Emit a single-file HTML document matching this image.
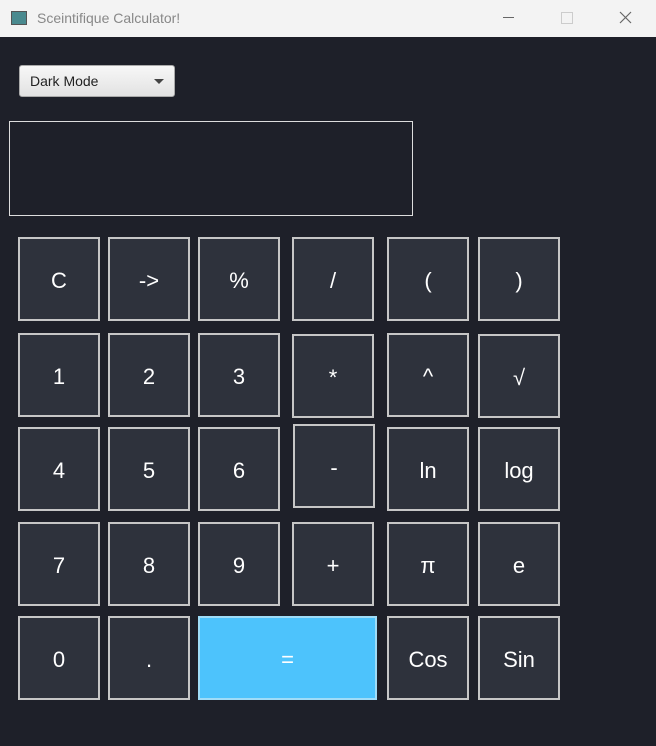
<!DOCTYPE html>
<html><head><style>
body{margin:0;width:656px;height:746px;background:#1e2029;font-family:"Liberation Sans",sans-serif;position:relative;overflow:hidden}
.tb{position:absolute;left:0;top:0;width:656px;height:37px;background:#f3f3f3}
.tb .t{position:absolute;left:37px;top:10px;font-size:14px;color:#888}
.ic{position:absolute;left:11px;top:11px;width:14px;height:12px;border:1px solid #555;background:#4a8a8f}
.b{position:absolute;box-sizing:border-box;border:2px solid #c6c6c6;background:#2e323c;color:#fff;font-size:22px;display:flex;align-items:center;justify-content:center;width:82px;height:84px;padding-top:4px}
.dd{position:absolute;left:19px;top:65px;width:156px;height:32px;box-sizing:border-box;border:1px solid #aaa;border-radius:3px;background:linear-gradient(#f7f7f7,#e2e2e2);font-size:14px;color:#222;padding:7px 0 0 10px}
.dd:after{content:"";position:absolute;right:10px;top:13px;border:5px solid transparent;border-top:5px solid #444}
.disp{position:absolute;left:9px;top:121px;width:404px;height:95px;box-sizing:border-box;border:1px solid #ddd;background:#1e2029}
</style></head><body>
<div class="tb"><div class="ic"></div><div class="t">Sceintifique Calculator!</div>
<div style="position:absolute;left:503px;top:17px;width:11px;height:1px;background:#666"></div>
<div style="position:absolute;left:561px;top:12px;width:10px;height:10px;border:1px solid #ccc"></div>
<svg style="position:absolute;left:619px;top:11px" width="13" height="13"><path d="M1 1L12 12M12 1L1 12" stroke="#666" stroke-width="1.2"/></svg></div>
<div class="dd">Dark Mode</div>
<div class="disp"></div>
<div class="b" style="left:18px;top:237px">C</div>
<div class="b" style="left:108px;top:237px">-&gt;</div>
<div class="b" style="left:198px;top:237px">%</div>
<div class="b" style="left:292px;top:237px">/</div>
<div class="b" style="left:387px;top:237px">(</div>
<div class="b" style="left:478px;top:237px">)</div>
<div class="b" style="left:18px;top:333px">1</div>
<div class="b" style="left:108px;top:333px">2</div>
<div class="b" style="left:198px;top:333px">3</div>
<div class="b" style="left:292px;top:334px">*</div>
<div class="b" style="left:387px;top:333px">^</div>
<div class="b" style="left:478px;top:334px">√</div>
<div class="b" style="left:18px;top:427px">4</div>
<div class="b" style="left:108px;top:427px">5</div>
<div class="b" style="left:198px;top:427px">6</div>
<div class="b" style="left:293px;top:424px">-</div>
<div class="b" style="left:387px;top:427px">ln</div>
<div class="b" style="left:478px;top:427px">log</div>
<div class="b" style="left:18px;top:522px">7</div>
<div class="b" style="left:108px;top:522px">8</div>
<div class="b" style="left:198px;top:522px">9</div>
<div class="b" style="left:292px;top:522px">+</div>
<div class="b" style="left:387px;top:522px">π</div>
<div class="b" style="left:478px;top:522px">e</div>
<div class="b" style="left:18px;top:616px">0</div>
<div class="b" style="left:108px;top:616px">.</div>
<div class="b" style="left:198px;top:616px;width:179px;background:#4dc3fc;border-color:#9fdcf7">=</div>
<div class="b" style="left:387px;top:616px">Cos</div>
<div class="b" style="left:478px;top:616px">Sin</div>
</body></html>
